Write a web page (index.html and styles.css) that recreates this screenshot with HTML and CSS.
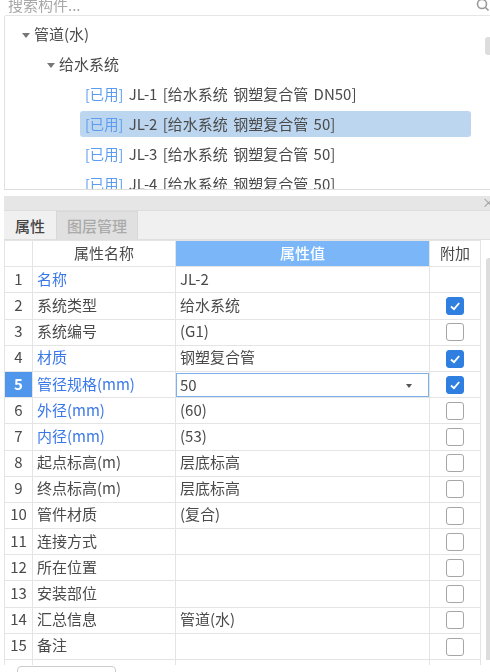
FILE: index.html
```html
<!DOCTYPE html>
<html lang="zh-CN">
  <head>
    <meta charset="UTF-8" />
    <title>属性</title>
    <link rel="stylesheet" href="styles.css">
  </head>
  <body>
    <div class="search">
      <span class="search-text">搜索构件...</span>
      <svg class="search-icon" width="14" height="14" viewBox="0 0 14 14"><circle cx="6" cy="4" r="4.5" fill="none" stroke="#999" stroke-width="1.6"/><path d="M9.5 7.5L12.5 10.5" stroke="#999" stroke-width="1.6"/></svg>
    </div>
    <div class="tree">
      <div class="tree-row level-0"><span class="arrow"></span>管道(水)</div>
      <div class="tree-row level-1"><span class="arrow"></span>给水系统</div>
      <div class="tree-row level-2"><span class="used">[已用]</span> JL-1 [给水系统 钢塑复合管 DN50]</div>
      <div class="tree-row level-2 selected"><span class="used">[已用]</span> JL-2 [给水系统 钢塑复合管 50]</div>
      <div class="tree-row level-2"><span class="used">[已用]</span> JL-3 [给水系统 钢塑复合管 50]</div>
      <div class="tree-row level-2"><span class="used">[已用]</span> JL-4 [给水系统 钢塑复合管 50]</div>
      <div class="tree-scroll"></div>
    </div>
    <div class="panel-title"><span class="close">×</span></div>
    <div class="tabs">
      <div class="tab active">属性</div>
      <div class="tab">图层管理</div>
    </div>
    <div class="grid-wrap">
      <table class="grid">
        <colgroup>
          <col class="col-num" /><col class="col-name" /><col class="col-value" /><col class="col-extra" />
        </colgroup>
        <tr class="head">
          <td></td><td class="center">属性名称</td><td class="center value-head">属性值</td><td class="center">附加</td>
        </tr>
        <tr><td class="num">1</td><td class="blue">名称</td><td>JL-2</td><td></td></tr>
        <tr><td class="num">2</td><td>系统类型</td><td>给水系统</td><td class="center"><span class="check on"><svg width="12" height="12" viewBox="0 0 12 12"><path d="M2 6.5L5 9.2L10.2 3" fill="none" stroke="#fff" stroke-width="1.8"/></svg></span></td></tr>
        <tr><td class="num">3</td><td>系统编号</td><td>(G1)</td><td class="center"><span class="check"></span></td></tr>
        <tr><td class="num">4</td><td class="blue">材质</td><td>钢塑复合管</td><td class="center"><span class="check on"><svg width="12" height="12" viewBox="0 0 12 12"><path d="M2 6.5L5 9.2L10.2 3" fill="none" stroke="#fff" stroke-width="1.8"/></svg></span></td></tr>
        <tr class="current"><td class="num">5</td><td class="blue">管径规格(mm)</td><td class="editing"><div class="edit-box">50<span class="drop"></span></div></td><td class="center"><span class="check on"><svg width="12" height="12" viewBox="0 0 12 12"><path d="M2 6.5L5 9.2L10.2 3" fill="none" stroke="#fff" stroke-width="1.8"/></svg></span></td></tr>
        <tr><td class="num">6</td><td class="blue">外径(mm)</td><td>(60)</td><td class="center"><span class="check"></span></td></tr>
        <tr><td class="num">7</td><td class="blue">内径(mm)</td><td>(53)</td><td class="center"><span class="check"></span></td></tr>
        <tr><td class="num">8</td><td>起点标高(m)</td><td>层底标高</td><td class="center"><span class="check"></span></td></tr>
        <tr><td class="num">9</td><td>终点标高(m)</td><td>层底标高</td><td class="center"><span class="check"></span></td></tr>
        <tr><td class="num">10</td><td>管件材质</td><td>(复合)</td><td class="center"><span class="check"></span></td></tr>
        <tr><td class="num">11</td><td>连接方式</td><td></td><td class="center"><span class="check"></span></td></tr>
        <tr><td class="num">12</td><td>所在位置</td><td></td><td class="center"><span class="check"></span></td></tr>
        <tr><td class="num">13</td><td>安装部位</td><td></td><td class="center"><span class="check"></span></td></tr>
        <tr><td class="num">14</td><td>汇总信息</td><td>管道(水)</td><td class="center"><span class="check"></span></td></tr>
        <tr><td class="num">15</td><td>备注</td><td></td><td class="center"><span class="check"></span></td></tr>
        <tr><td></td><td></td><td></td><td></td></tr>
      </table>
    </div>
    <div class="grid-scroll"></div>
    <div class="bottom-btn"></div>
  </body>
</html>
```
FILE: styles.css
```css
html, body {
  margin: 0;
  height: 672px;
  overflow: hidden;
}
body {
  background-color: #fff;
  color: #4a4a4a;
  font-family: "Noto Sans CJK SC", "Noto Sans", sans-serif;
  font-size: 15px;
  filter: blur(0.35px);
  position: relative;
}
.search {
  height: 15px;
  margin-left: 5px;
  border-bottom: 1px solid #e6e6e6;
  overflow: hidden;
  position: relative;
}
.search-text {
  display: block;
  margin: -5px 0 0 3px;
  color: #a8a8a8;
  line-height: 20px;
}
.search-icon {
  position: absolute;
  right: 0;
  top: 0;
}
.tree {
  height: 174px;
  margin-left: 4px;
  padding-top: 5px;
  box-sizing: border-box;
  border-left: 1px solid #e2e2e2;
  border-bottom: 1px solid #dcdcdc;
  overflow: hidden;
  position: relative;
}
.tree-row {
  height: 26px;
  margin-bottom: 4px;
  line-height: 26px;
  white-space: nowrap;
  word-spacing: 2px;
}
.level-0 {
  padding-left: 17px;
}
.level-1 {
  padding-left: 42px;
}
.level-2 {
  margin-left: 75px;
  margin-right: 19px;
  padding-left: 5px;
  border-radius: 3px;
}
.selected {
  background-color: #bdd6f0;
}
.used {
  color: #5b9cf0;
  font-size: 14.3px;
}
.arrow {
  display: inline-block;
  width: 0;
  height: 0;
  margin-right: 4px;
  vertical-align: 2px;
  border-left: 4px solid transparent;
  border-right: 4px solid transparent;
  border-top: 5px solid #777;
}
.tree-scroll {
  position: absolute;
  right: 0;
  top: 21px;
  width: 5px;
  height: 18px;
  border-radius: 3px 0 0 3px;
  background-color: #ddd;
}
.panel-title {
  height: 14px;
  margin: 6px 0 0 4px;
  background-color: #e6e6e6;
  border-bottom: 1px solid #ddd;
  overflow: hidden;
  position: relative;
}
.close {
  position: absolute;
  right: -5px;
  top: -3px;
  color: #999;
  font-size: 13px;
  line-height: 18px;
}
.tabs {
  display: flex;
  height: 28px;
  margin-left: 4px;
  background-color: #f0f0f0;
  border-bottom: 1px solid #dfdfdf;
}
.tab {
  width: 80px;
  text-align: center;
  line-height: 28px;
  color: #aaa;
  background-color: #e0e0e0;
  border: 1px solid #d8d8d8;
  border-bottom: none;
  font-weight: 500;
}
.tab.active {
  width: 50px;
  color: #444;
  background-color: #f0f0f0;
  border-color: #f0f0f0;
}
.grid-wrap {
  height: 425px;
  margin-left: 4px;
  overflow: hidden;
}
.grid {
  width: 477px;
  table-layout: fixed;
  border-collapse: collapse;
}
.col-num {
  width: 28px;
}
.col-name {
  width: 143px;
}
.col-extra {
  width: 51px;
}
.grid td {
  height: 26.2px;
  padding: 0 4px 2px;
  box-sizing: border-box;
  border: 1px solid #e4e4e4;
  line-height: 22px;
  white-space: nowrap;
}
.grid td.editing {
  padding: 0;
}
.center {
  text-align: center;
}
.num {
  text-align: center;
}
.blue {
  color: #3a78e8;
}
.value-head {
  color: #fff;
  background-color: #7ab6f8;
  font-weight: 500;
}
.grid .current .num {
  color: #fff;
  background-color: #4f96ec;
  font-weight: 700;
}
.edit-box {
  height: 24px;
  padding-left: 3px;
  box-sizing: border-box;
  border: 1px solid #7ab0ec;
  position: relative;
  line-height: 21px;
}
.drop {
  position: absolute;
  right: 16px;
  top: 10px;
  border-left: 3px solid transparent;
  border-right: 3px solid transparent;
  border-top: 4px solid #555;
}
.check {
  display: inline-block;
  width: 18px;
  height: 18px;
  margin-bottom: 1px;
  box-sizing: border-box;
  vertical-align: middle;
  border: 1px solid #a6a6a6;
  border-radius: 3px;
  background-color: #fff;
}
.check.on {
  border-color: #2f7fe0;
  background-color: #2f7fe0;
}
.check svg {
  display: block;
  margin: 2px 0 0 2px;
}
.grid-scroll {
  position: absolute;
  left: 486px;
  top: 258px;
  width: 6px;
  height: 402px;
  border-radius: 3px 0 0 0;
  background-color: #ddd;
}
.bottom-btn {
  width: 99px;
  height: 12px;
  margin: 1px 0 0 17px;
  box-sizing: border-box;
  border: 1px solid #ccc;
  border-radius: 4px;
}
```
